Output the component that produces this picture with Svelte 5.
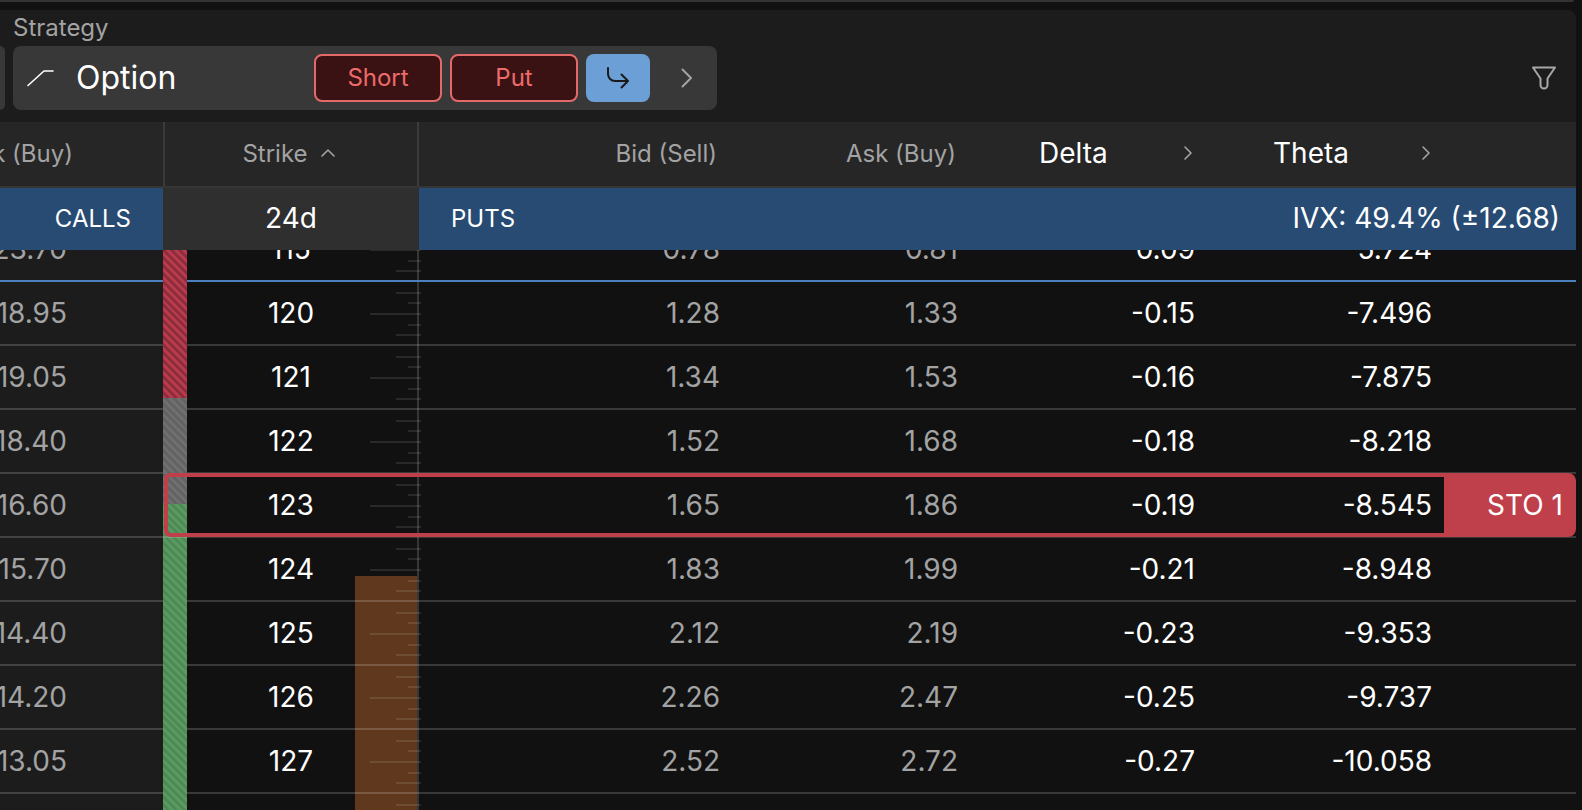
<script lang="ts">
  const rows = [
    { call: '23.70', strike: 115, bid: '0.78', ask: '0.81', delta: '-0.09', theta: '-5.724', atm: true },
    { call: '18.95', strike: 120, bid: '1.28', ask: '1.33', delta: '-0.15', theta: '-7.496' },
    { call: '19.05', strike: 121, bid: '1.34', ask: '1.53', delta: '-0.16', theta: '-7.875' },
    { call: '18.40', strike: 122, bid: '1.52', ask: '1.68', delta: '-0.18', theta: '-8.218' },
    { call: '16.60', strike: 123, bid: '1.65', ask: '1.86', delta: '-0.19', theta: '-8.545', order: 'STO 1' },
    { call: '15.70', strike: 124, bid: '1.83', ask: '1.99', delta: '-0.21', theta: '-8.948' },
    { call: '14.40', strike: 125, bid: '2.12', ask: '2.19', delta: '-0.23', theta: '-9.353' },
    { call: '14.20', strike: 126, bid: '2.26', ask: '2.47', delta: '-0.25', theta: '-9.737' },
    { call: '13.05', strike: 127, bid: '2.52', ask: '2.72', delta: '-0.27', theta: '-10.058' }
  ];

  // ruler next to the strikes: six steps per row, the row line takes the middle one
  const tickKinds = ['long', 'short', 'medium', '', 'medium', 'short'];
  const ticks = Array.from({ length: 54 }, (_, i) => ({
    top: (i * 64) / 6,
    kind: tickKinds[i % 6]
  })).filter((t) => t.kind);
</script>

<div class="page">
  <div class="strip"></div>

  <section class="panel">
    <div class="label">Strategy</div>
    <div class="controls">
      <div class="stub"></div>
      <div class="card">
        <svg class="shape" width="28" height="18" viewBox="0 0 28 18">
          <path d="M1 16.5 L17 2 H26" />
        </svg>
        <span class="name">Option</span>
        <button class="pill">Short</button>
        <button class="pill">Put</button>
        <button class="go" aria-label="Roll">
          <svg width="24" height="24" viewBox="0 0 24 24">
            <path d="M2 2 V8 a7 7 0 0 0 7 7 H22 M15.5 8.5 L22 15 L15.5 21.5" />
          </svg>
        </button>
        <svg class="more" width="12" height="20" viewBox="0 0 12 20">
          <path d="M1.5 1.5 L10 10 L1.5 18.5" />
        </svg>
      </div>
      <svg class="filter" width="26" height="24" viewBox="0 0 26 24">
        <path d="M2 1.5 H24 L16.5 12.5 V19 a3.5 3.5 0 0 1 -7 0 V12.5 Z" />
      </svg>
    </div>
  </section>

  <div class="grid head">
    <div class="cell h-calls"><span>Ask (Buy)</span></div>
    <div class="cell h-strike">
      <span>Strike</span>
      <svg width="16" height="10" viewBox="0 0 16 10"><path d="M2 8 L8 2 L14 8" /></svg>
    </div>
    <div class="cell h-num"><span>Bid (Sell)</span></div>
    <div class="cell h-num ask"><span>Ask (Buy)</span></div>
    <div class="cell h-pick">
      <span>Delta</span>
      <svg width="10" height="16" viewBox="0 0 10 16"><path d="M2 2 L8 8 L2 14" /></svg>
    </div>
    <div class="cell h-pick theta">
      <span>Theta</span>
      <svg width="10" height="16" viewBox="0 0 10 16"><path d="M2 2 L8 8 L2 14" /></svg>
    </div>
    <div></div>
  </div>

  <div class="grid band">
    <div class="calls-tag">CALLS</div>
    <div class="dte">24d</div>
    <div class="puts-tag">
      <span>PUTS</span>
      <span>IVX: 49.4% (±12.68)</span>
    </div>
  </div>

  <div class="body">
    <div class="rail">
      <div class="volume"></div>
      <div class="axis"></div>
      {#each ticks as t}
        <div class="tick {t.kind}" style="top: {t.top}px"></div>
      {/each}
    </div>

    <div class="itm-bar">
      <div class="seg red"></div>
      <div class="seg gray"></div>
      <div class="seg green"></div>
    </div>

    <div class="rows">
      {#each rows as r}
        <div class="grid row" class:atm={r.atm} class:picked={r.order}>
          <div class="cell c-call"><span>{r.call}</span></div>
          <div class="cell c-strike">{r.strike}</div>
          <div class="cell c-num">{r.bid}</div>
          <div class="cell c-num">{r.ask}</div>
          <div class="cell c-greek">{r.delta}</div>
          <div class="cell c-greek">{r.theta}</div>
          <div></div>
          {#if r.order}
            <div class="frame"></div>
            <div class="order">{r.order}</div>
          {/if}
        </div>
      {/each}
      <div class="grid row"></div>
    </div>
  </div>
</div>

<style>
  :global(body) {
    margin: 0;
    background: #111111;
  }
  .page {
    width: 1582px;
    height: 810px;
    overflow: hidden;
    display: flex;
    flex-direction: column;
    background: #111111;
    color: #fff;
    font-family: Inter, "Liberation Sans", sans-serif;
  }
  svg {
    display: block;
    fill: none;
    stroke-width: 2;
    stroke-linecap: round;
    stroke-linejoin: round;
    flex: none;
  }
  .strip {
    width: 1574px;
    height: 2px;
    background: #333333;
    border-radius: 0 0 4px 0;
    margin-bottom: 8px;
    flex: none;
  }
  .panel {
    width: 1576px;
    height: 112px;
    flex: none;
    background: #1c1c1c;
    border-radius: 0 8px 0 0;
    box-sizing: border-box;
    position: relative;
  }
  .label {
    height: 36px;
    padding-left: 13px;
    font-size: 24px;
    line-height: 35px;
    color: #a3a3a3;
  }
  .controls {
    display: flex;
    align-items: center;
    gap: 8px;
    height: 64px;
  }
  .stub {
    width: 5px;
    height: 64px;
    background: #383838;
    border-radius: 0 8px 8px 0;
  }
  .card {
    width: 704px;
    height: 64px;
    box-sizing: border-box;
    background: #383838;
    border-radius: 8px;
    display: flex;
    align-items: center;
    padding-left: 14px;
  }
  .shape {
    stroke: #fff;
    stroke-width: 1.6;
  }
  .name {
    font-size: 32px;
    margin: 0 0 2px 21px;
    width: 238px;
    flex: none;
  }
  .pill {
    width: 128px;
    height: 48px;
    margin-right: 8px;
    box-sizing: border-box;
    background: #3a1213;
    border: 2px solid #e46a6a;
    border-radius: 8px;
    color: #ee6b6b;
    font: 24px Inter, "Liberation Sans", sans-serif;
    padding: 0 0 2px;
  }
  .go {
    width: 64px;
    height: 48px;
    background: #6c9fd6;
    border: 0;
    border-radius: 8px;
    padding: 0;
    display: flex;
    align-items: center;
    justify-content: center;
  }
  .go svg {
    stroke: #1a1a1a;
  }
  .more {
    stroke: #a3a3a3;
    margin-left: 31px;
  }
  .filter {
    stroke: #a8a8a8;
    margin-left: auto;
    margin-right: 19px;
  }

  .grid {
    display: grid;
    grid-template-columns: 163px 256px 301px 238px 237px 237px 144px;
    width: 1576px;
    box-sizing: border-box;
  }
  .cell {
    display: flex;
    align-items: center;
    justify-content: flex-end;
    white-space: nowrap;
  }

  .head {
    height: 66px;
    flex: none;
    background: #262626;
    border-bottom: 2px solid #363636;
    font-size: 24px;
    color: #a3a3a3;
  }
  .head .cell {
    padding-bottom: 2px;
  }
  .h-calls {
    padding-right: 90px;
    border-right: 2px solid #3a3a3a;
    margin-right: -2px;
  }
  .h-strike {
    justify-content: center;
    gap: 12px;
    border-right: 2px solid #3a3a3a;
    padding-right: 2px;
  }
  .h-strike svg,
  .h-pick svg {
    stroke: #a3a3a3;
    stroke-width: 1.6;
  }
  .h-num {
    padding-right: 3px;
  }
  .h-num.ask {
    padding-right: 2px;
  }
  .h-pick {
    justify-content: space-between;
    padding-left: 81px;
    padding-right: 2px;
    color: #fff;
    font-size: 28px;
  }
  .h-pick.theta {
    padding-left: 78px;
    padding-right: 1px;
  }

  .band {
    height: 62px;
    flex: none;
    font-size: 24px;
    position: relative;
    z-index: 3;
  }
  .calls-tag {
    background: #274b73;
    display: flex;
    align-items: center;
    justify-content: flex-end;
    padding: 0 32px 2px 0;
  }
  .dte {
    background: #2f2f2f;
    display: flex;
    align-items: center;
    justify-content: center;
    font-size: 28px;
    padding-bottom: 2px;
  }
  .puts-tag {
    grid-column: 3 / -1;
    background: #274b73;
    display: flex;
    align-items: center;
    justify-content: space-between;
    padding: 0 16px 2px 32px;
  }
  .puts-tag span:last-child {
    font-size: 28px;
  }

  .body {
    flex: 1;
    min-height: 0;
    position: relative;
    overflow: hidden;
    background: linear-gradient(90deg, #1c1c1c 163px, transparent 163px);
  }
  .rows {
    margin-top: -32px;
    position: relative;
  }
  .row {
    height: 64px;
    border-bottom: 2px solid rgba(255, 255, 255, 0.17);
    font-size: 28px;
    position: relative;
  }
  .row.atm {
    border-bottom-color: #4a80bb;
  }
  .row.picked {
    z-index: 3;
  }
  .c-call {
    color: #a3a3a3;
    padding-right: 96px;
  }
  .c-strike {
    justify-content: center;
  }
  .c-num {
    color: #a3a3a3;
  }

  .frame {
    position: absolute;
    left: 164px;
    right: 132px;
    top: -1px;
    height: 64px;
    box-sizing: border-box;
    border: 4px solid #bf3f4a;
    border-right: 0;
    border-radius: 6px 0 0 6px;
  }
  .order {
    position: absolute;
    right: 0;
    width: 132px;
    top: -1px;
    height: 64px;
    box-sizing: border-box;
    padding-right: 13px;
    background: #bf3f4a;
    border-radius: 0 8px 8px 0;
    display: flex;
    align-items: center;
    justify-content: flex-end;
    font-size: 28px;
  }

  .itm-bar {
    position: absolute;
    left: 163px;
    top: 0;
    bottom: 0;
    width: 24px;
    z-index: 2;
    display: flex;
    flex-direction: column;
  }
  .seg.red {
    height: 148px;
    background: repeating-linear-gradient(45deg, #b93a4b 0 2.8px, #8e2d3e 2.8px 5.6px);
  }
  .seg.gray {
    height: 106px;
    background: repeating-linear-gradient(45deg, #6f6f6f 0 2.8px, #636363 2.8px 5.6px);
  }
  .seg.green {
    flex: 1;
    background: repeating-linear-gradient(45deg, #5a9a60 0 2.8px, #4e8a55 2.8px 5.6px);
  }

  .rail {
    position: absolute;
    left: 355px;
    top: 0;
    bottom: 0;
    width: 66px;
  }
  .volume {
    position: absolute;
    left: 0;
    top: 326px;
    bottom: 0;
    width: 64px;
    box-sizing: border-box;
    background: #5f381d;
    border-right: 2px solid #7d4c2a;
  }
  .axis {
    position: absolute;
    left: 62px;
    top: 0;
    bottom: 0;
    width: 2px;
    background: #363636;
  }
  .tick {
    position: absolute;
    right: 0;
    height: 2px;
    margin-top: -1px;
    background: rgba(255, 255, 255, 0.1);
  }
  .tick.long {
    width: 51px;
  }
  .tick.medium {
    width: 25px;
  }
  .tick.short {
    width: 13px;
  }
</style>
